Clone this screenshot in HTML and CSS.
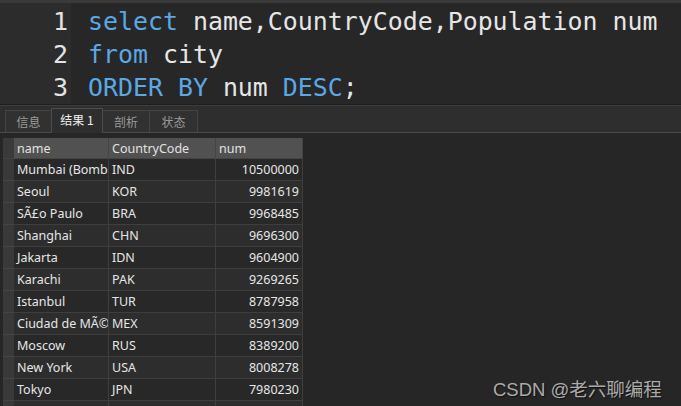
FILE: index.html
```html
<!DOCTYPE html>
<html>
<head>
<meta charset="utf-8">
<link rel="stylesheet" href="styles.css">
</head>
<body>
<div class="app">
  <div class="topline"></div>
  <div class="editor">
    <div class="gutter">
      <div class="ln">1</div>
      <div class="ln">2</div>
      <div class="ln">3</div>
    </div>
    <div class="code">
      <div class="line"><span class="kw">select</span> name,CountryCode,Population num</div>
      <div class="line"><span class="kw">from</span> city</div>
      <div class="line"><span class="kw">ORDER BY</span> num <span class="kw">DESC</span>;</div>
    </div>
  </div>
  <div class="sep"></div>
  <div class="tabbar">
    <div class="tab">信息</div>
    <div class="tab active">结果 1</div>
    <div class="tab">剖析</div>
    <div class="tab">状态</div>
  </div>
  <div class="results">
    <div class="grid">
      <div class="row head">
        <div class="ind"></div><div class="cell">name</div><div class="cell">CountryCode</div><div class="cell">num</div>
      </div>
      <div class="row"><div class="ind"></div><div class="cell">Mumbai (Bombay)</div><div class="cell">IND</div><div class="cell num">10500000</div></div>
      <div class="row alt"><div class="ind"></div><div class="cell">Seoul</div><div class="cell">KOR</div><div class="cell num">9981619</div></div>
      <div class="row"><div class="ind"></div><div class="cell">SÃ£o Paulo</div><div class="cell">BRA</div><div class="cell num">9968485</div></div>
      <div class="row alt"><div class="ind"></div><div class="cell">Shanghai</div><div class="cell">CHN</div><div class="cell num">9696300</div></div>
      <div class="row"><div class="ind"></div><div class="cell">Jakarta</div><div class="cell">IDN</div><div class="cell num">9604900</div></div>
      <div class="row alt"><div class="ind"></div><div class="cell">Karachi</div><div class="cell">PAK</div><div class="cell num">9269265</div></div>
      <div class="row"><div class="ind"></div><div class="cell">Istanbul</div><div class="cell">TUR</div><div class="cell num">8787958</div></div>
      <div class="row alt"><div class="ind"></div><div class="cell">Ciudad de MÃ©xico</div><div class="cell">MEX</div><div class="cell num">8591309</div></div>
      <div class="row"><div class="ind"></div><div class="cell">Moscow</div><div class="cell">RUS</div><div class="cell num">8389200</div></div>
      <div class="row alt"><div class="ind"></div><div class="cell">New York</div><div class="cell">USA</div><div class="cell num">8008278</div></div>
      <div class="row"><div class="ind"></div><div class="cell">Tokyo</div><div class="cell">JPN</div><div class="cell num">7980230</div></div>
      <div class="row alt"><div class="ind"></div><div class="cell"></div><div class="cell"></div><div class="cell num"></div></div>
    </div>
  </div>
  <div class="watermark">CSDN @老六聊编程</div>
</div>
</body>
</html>
```

FILE: styles.css
```css
html, body {
  margin: 0;
  padding: 0;
  background: #262626;
}
.app {
  position: relative;
  width: 681px;
  height: 406px;
  overflow: hidden;
  background: #262626;
  font-family: "Noto Sans", "Noto Sans CJK SC", sans-serif;
}
.topline {
  height: 3px;
  background: #3a3a3a;
}
.editor {
  display: flex;
  height: 101px;
  background: #272727;
}
.gutter {
  width: 71px;
  background: #2c2c2c;
  padding-top: 2px;
  box-sizing: border-box;
}
.ln {
  height: 33px;
  line-height: 33px;
  text-align: right;
  padding-right: 3px;
  font-family: "DejaVu Sans Mono", monospace;
  font-size: 25px;
  color: #e4e4e4;
}
.code {
  padding-left: 17px;
  padding-top: 2px;
  font-family: "DejaVu Sans Mono", monospace;
  font-size: 24.9px;
  color: #e6e6e6;
}
.line {
  height: 33px;
  line-height: 33px;
  white-space: pre;
}
.kw {
  color: #5ba8e4;
}
.sep {
  height: 2px;
  background: #1e1e1e;
  border-bottom: 1px solid #3e3e3e;
  box-sizing: border-box;
}
.tabbar {
  display: flex;
  align-items: flex-end;
  height: 27px;
  padding-left: 5px;
  background: #2e2e2e;
  border-bottom: 1px solid #4a4a4a;
  box-sizing: border-box;
}
.tab {
  height: 22px;
  line-height: 21px;
  box-sizing: border-box;
  text-align: center;
  white-space: nowrap;
  font-family: "Noto Sans CJK SC", sans-serif;
  font-size: 12px;
  color: #9a9a9a;
  background: #313131;
  border: 1px solid #444;
  border-bottom: none;
  margin-right: -1px;
}
.tab:nth-child(1) { width: 47px; }
.tab:nth-child(2) { width: 52px; }
.tab:nth-child(3) { width: 48px; }
.tab:nth-child(4) { width: 49px; }
.tab.active {
  height: 25px;
  line-height: 21px;
  color: #eeeeee;
  background: #2e2e2e;
  border-color: #4c4c4c;
  position: relative;
  z-index: 1;
  margin-bottom: -1px;
}
.results {
  padding: 5px 0 0 3px;
}
.grid {
  width: 300px;
}
.row {
  display: grid;
  grid-template-columns: 11px 95px 107px 87px;
  height: 22px;
  background: #282828;
}
.row.alt {
  background: #2d2d2d;
}
.row.head {
  height: 21px;
  background: #515151;
}
.ind {
  background: #393939;
  border-bottom: 1px solid #444;
}
.cell {
  box-sizing: border-box;
  padding: 0 3px;
  font-size: 12.5px;
  line-height: 22px;
  color: #e6e6e6;
  white-space: nowrap;
  overflow: hidden;
  border-right: 1px solid #3e3e3e;
  border-bottom: 1px solid #3e3e3e;
}
.head .cell {
  color: #e2e2e2;
  line-height: 21px;
  border-right-color: #444;
  border-bottom-color: #444;
}
.head .ind {
  background: #3a3a3a;
}
.cell.num {
  text-align: right;
}
.watermark {
  position: absolute;
  left: 493px;
  top: 375px;
  font-family: "Liberation Sans", "Noto Sans CJK SC", sans-serif;
  font-size: 18.5px;
  color: #ababab;
  text-shadow: 1px 1px 1px #111;
  white-space: nowrap;
}
```
